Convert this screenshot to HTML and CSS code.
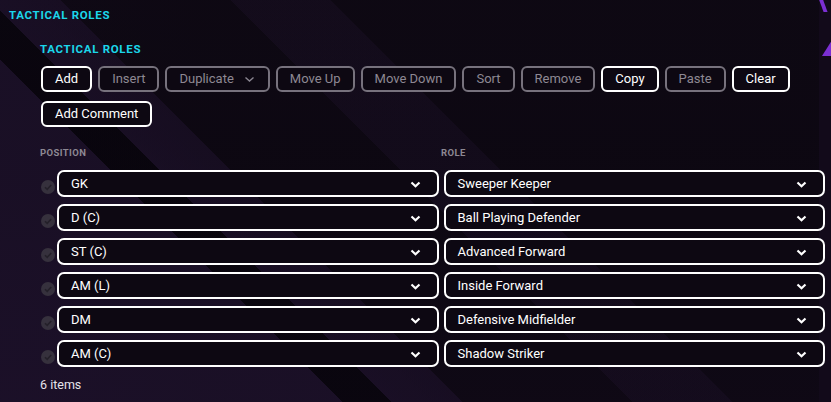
FILE: index.html
```html
<!DOCTYPE html>
<html>
<head>
<meta charset="utf-8">
<link rel="stylesheet" href="styles.css">
</head>
<body>
<div class="page">
  <div class="side-strip">
    <div class="slash slash-a"></div>
    <div class="slash slash-b"></div>
  </div>
  <h1 class="title">TACTICAL ROLES</h1>
  <section class="panel">
    <h2 class="subtitle">TACTICAL ROLES</h2>
    <div class="toolbar">
      <button class="btn">Add</button>
      <button class="btn off">Insert</button>
      <button class="btn off dup">Duplicate <svg class="dd" width="11" height="7" viewBox="0 0 11 7"><polyline points="1.5,1.5 5.5,5 9.5,1.5" fill="none" stroke="#8a8590" stroke-width="1.4"/></svg></button>
      <button class="btn off">Move Up</button>
      <button class="btn off">Move Down</button>
      <button class="btn off">Sort</button>
      <button class="btn off">Remove</button>
      <button class="btn">Copy</button>
      <button class="btn off">Paste</button>
      <button class="btn">Clear</button>
    </div>
    <div class="toolbar second">
      <button class="btn">Add Comment</button>
    </div>

    <div class="heads">
      <div class="head-pos">POSITION</div>
      <div class="head-role">ROLE</div>
    </div>

    <div class="rows">
      <div class="row"><span class="check"><svg width="14" height="14" viewBox="0 0 14 14"><circle cx="7" cy="7" r="7" fill="#36313d"/><polyline points="4,7.2 6.2,9.4 10.2,5" fill="none" stroke="#242029" stroke-width="1.6"/></svg></span><div class="sel">GK<svg class="chev" width="11" height="7" viewBox="0 0 11 7"><polyline points="1.5,1.5 5.5,5.2 9.5,1.5" fill="none" stroke="#fff" stroke-width="2.2"/></svg></div><div class="sel">Sweeper Keeper<svg class="chev" width="11" height="7" viewBox="0 0 11 7"><polyline points="1.5,1.5 5.5,5.2 9.5,1.5" fill="none" stroke="#fff" stroke-width="2.2"/></svg></div></div>
      <div class="row"><span class="check"><svg width="14" height="14" viewBox="0 0 14 14"><circle cx="7" cy="7" r="7" fill="#36313d"/><polyline points="4,7.2 6.2,9.4 10.2,5" fill="none" stroke="#242029" stroke-width="1.6"/></svg></span><div class="sel">D (C)<svg class="chev" width="11" height="7" viewBox="0 0 11 7"><polyline points="1.5,1.5 5.5,5.2 9.5,1.5" fill="none" stroke="#fff" stroke-width="2.2"/></svg></div><div class="sel">Ball Playing Defender<svg class="chev" width="11" height="7" viewBox="0 0 11 7"><polyline points="1.5,1.5 5.5,5.2 9.5,1.5" fill="none" stroke="#fff" stroke-width="2.2"/></svg></div></div>
      <div class="row"><span class="check"><svg width="14" height="14" viewBox="0 0 14 14"><circle cx="7" cy="7" r="7" fill="#36313d"/><polyline points="4,7.2 6.2,9.4 10.2,5" fill="none" stroke="#242029" stroke-width="1.6"/></svg></span><div class="sel">ST (C)<svg class="chev" width="11" height="7" viewBox="0 0 11 7"><polyline points="1.5,1.5 5.5,5.2 9.5,1.5" fill="none" stroke="#fff" stroke-width="2.2"/></svg></div><div class="sel">Advanced Forward<svg class="chev" width="11" height="7" viewBox="0 0 11 7"><polyline points="1.5,1.5 5.5,5.2 9.5,1.5" fill="none" stroke="#fff" stroke-width="2.2"/></svg></div></div>
      <div class="row"><span class="check"><svg width="14" height="14" viewBox="0 0 14 14"><circle cx="7" cy="7" r="7" fill="#36313d"/><polyline points="4,7.2 6.2,9.4 10.2,5" fill="none" stroke="#242029" stroke-width="1.6"/></svg></span><div class="sel">AM (L)<svg class="chev" width="11" height="7" viewBox="0 0 11 7"><polyline points="1.5,1.5 5.5,5.2 9.5,1.5" fill="none" stroke="#fff" stroke-width="2.2"/></svg></div><div class="sel">Inside Forward<svg class="chev" width="11" height="7" viewBox="0 0 11 7"><polyline points="1.5,1.5 5.5,5.2 9.5,1.5" fill="none" stroke="#fff" stroke-width="2.2"/></svg></div></div>
      <div class="row"><span class="check"><svg width="14" height="14" viewBox="0 0 14 14"><circle cx="7" cy="7" r="7" fill="#36313d"/><polyline points="4,7.2 6.2,9.4 10.2,5" fill="none" stroke="#242029" stroke-width="1.6"/></svg></span><div class="sel">DM<svg class="chev" width="11" height="7" viewBox="0 0 11 7"><polyline points="1.5,1.5 5.5,5.2 9.5,1.5" fill="none" stroke="#fff" stroke-width="2.2"/></svg></div><div class="sel">Defensive Midfielder<svg class="chev" width="11" height="7" viewBox="0 0 11 7"><polyline points="1.5,1.5 5.5,5.2 9.5,1.5" fill="none" stroke="#fff" stroke-width="2.2"/></svg></div></div>
      <div class="row"><span class="check"><svg width="14" height="14" viewBox="0 0 14 14"><circle cx="7" cy="7" r="7" fill="#36313d"/><polyline points="4,7.2 6.2,9.4 10.2,5" fill="none" stroke="#242029" stroke-width="1.6"/></svg></span><div class="sel">AM (C)<svg class="chev" width="11" height="7" viewBox="0 0 11 7"><polyline points="1.5,1.5 5.5,5.2 9.5,1.5" fill="none" stroke="#fff" stroke-width="2.2"/></svg></div><div class="sel">Shadow Striker<svg class="chev" width="11" height="7" viewBox="0 0 11 7"><polyline points="1.5,1.5 5.5,5.2 9.5,1.5" fill="none" stroke="#fff" stroke-width="2.2"/></svg></div></div>
    </div>

    <div class="count">6 items</div>
  </section>
</div>
</body>
</html>
```

FILE: styles.css
```css
* { box-sizing: border-box; }
html, body { margin: 0; padding: 0; }
body {
  width: 831px;
  height: 402px;
  overflow: hidden;
  font-family: Roboto, "Liberation Sans", sans-serif;
  color: #fff;
  background: #0d0812;
}
.page {
  position: relative;
  width: 831px;
  height: 402px;
  overflow: hidden;
  background:
    linear-gradient(45deg,
      rgba(30,18,44,0.75) 0px, rgba(30,18,44,0.75) 242px,
      rgba(6,3,10,0.55) 242px, rgba(6,3,10,0.55) 277px,
      rgba(34,20,50,0.55) 277px, rgba(34,20,50,0.45) 327px,
      rgba(0,0,0,0) 327px, rgba(0,0,0,0) 447px,
      rgba(40,24,58,0.22) 447px, rgba(40,24,58,0.22) 518px,
      rgba(0,0,0,0) 518px),
    linear-gradient(90deg, rgba(13,8,18,0) 0px, rgba(13,8,18,0) 30px, rgba(13,8,18,0.7) 200px, rgba(13,8,18,0.7) 100%),
    linear-gradient(180deg, #0f0915 0%, #0c0711 45%, #130a1c 100%);
  padding: 9px 0 0 0;
}
.side-strip {
  position: absolute;
  top: 0;
  right: 0;
  width: 12px;
  height: 402px;
  background: #120a1a;
}
.slash {
  position: absolute;
  background: #7b2fd3;
}
.slash-a {
  left: 2px;
  top: -2px;
  width: 4px;
  height: 14px;
  transform: skewX(20deg);
}
.slash-b {
  left: 3px;
  top: 34px;
  width: 14px;
  height: 22px;
  clip-path: polygon(100% 0, 100% 100%, 0 100%);
}
.title {
  margin: 0 0 0 9px;
  font-size: 11.5px;
  font-weight: 700;
  line-height: 13px;
  color: #1bd6ea;
  letter-spacing: 0.7px;
}
.panel {
  position: relative;
  z-index: 1;
  padding: 0 6px 0 40px;
}
.subtitle {
  margin: 21px 0 0 0;
  font-size: 11.5px;
  font-weight: 700;
  line-height: 13px;
  color: #1bd6ea;
  letter-spacing: 0.7px;
}
.toolbar {
  display: flex;
  gap: 6px;
  margin-top: 10px;
  margin-left: 1px;
}
.toolbar.second { margin-top: 9px; }
.btn {
  height: 26px;
  padding: 0 12px;
  border: 2px solid #fff;
  border-radius: 6px;
  background: #0d0812;
  color: #fff;
  font-family: Roboto, "Liberation Sans", sans-serif;
  font-size: 13px;
  line-height: 22px;
  display: flex;
  align-items: center;
  gap: 10px;
}
.btn.off {
  border-color: #77727d;
  color: #8d8893;
}
.btn.dup { padding-right: 13px; }
.heads {
  display: flex;
  margin-top: 20px;
  font-size: 9.5px;
  font-weight: 700;
  color: #8d8893;
  line-height: 11px;
  letter-spacing: 0.4px;
}
.head-pos { width: 401px; }
.rows {
  margin-top: 12px;
  display: flex;
  flex-direction: column;
  gap: 7px;
}
.row {
  display: flex;
  align-items: center;
}
.check {
  width: 17px;
  flex: none;
  padding-left: 1px;
  padding-top: 6px;
  display: flex;
  align-items: center;
}
.sel {
  flex: 1;
  height: 27px;
  border: 2px solid #fff;
  border-radius: 7px;
  background: #0d0812;
  display: flex;
  align-items: center;
  justify-content: space-between;
  padding: 0 16px 0 12px;
  font-size: 13px;
  color: #fff;
}
.check + .sel { margin-right: 5px; }
.chev { margin-top: 2px; }
.count {
  margin-top: 10px;
  font-size: 12.5px;
  color: #e6e3ea;
  line-height: 15px;
}
```
